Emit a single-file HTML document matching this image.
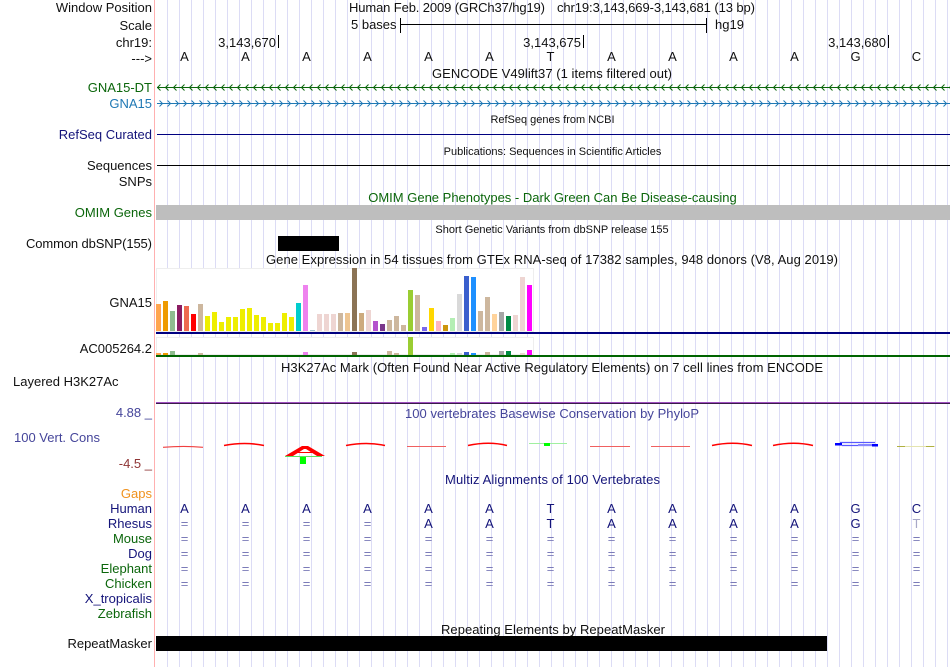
<!DOCTYPE html>
<html><head><meta charset="utf-8"><style>
html,body{margin:0;padding:0;background:#fff;width:950px;height:667px;overflow:hidden}
svg{display:block}
text{font-family:"Liberation Sans",sans-serif;font-size:13px;fill:#111}
.e{text-anchor:end}.m{text-anchor:middle}
.s{font-size:11px}
.g{fill:#0b660b}.b{fill:#14147a}.eq{fill:#7b7bb8;font-size:13px}
</style></head><body>
<svg width="950" height="667" viewBox="0 0 950 667" xmlns="http://www.w3.org/2000/svg">
<defs>
<pattern id="cl" x="157" y="82" width="8" height="11" patternUnits="userSpaceOnUse"><path d="M3.500 2.500 L0.500 5.500 L3.500 8.500" fill="none" stroke="#0b660b" stroke-width="1"/></pattern>
<pattern id="cr" x="157" y="98" width="8" height="11" patternUnits="userSpaceOnUse"><path d="M2.500 2.500 L5.500 5.500 L2.500 8.500" fill="none" stroke="#1f78b4" stroke-width="1"/></pattern>
</defs>
<rect width="950" height="667" fill="#fff"/>
<path d="M167 333.500H950" stroke="#dcdcf5" stroke-width="667" stroke-dasharray="1 11" fill="none"/>
<rect x="154" y="0" width="1" height="667" fill="#ffb0b0"/>

<!-- left labels -->
<text class="e" x="152" y="12">Window Position</text>
<text class="e" x="152" y="30">Scale</text>
<text class="e" x="152" y="47">chr19:</text>
<text class="e" x="152" y="63">---&gt;</text>
<text class="e g" x="152" y="92">GNA15-DT</text>
<text class="e" x="152" y="108" style="fill:#1f78b4">GNA15</text>
<text class="e b" x="152" y="139">RefSeq Curated</text>
<text class="e" x="152" y="170">Sequences</text>
<text class="e" x="152" y="186">SNPs</text>
<text class="e g" x="152" y="217">OMIM Genes</text>
<text x="26" y="248" textLength="126">Common dbSNP(155)</text>
<text class="e" x="152" y="307">GNA15</text>
<text class="e" x="152" y="353">AC005264.2</text>
<text x="13" y="386">Layered H3K27Ac</text>
<text class="e" x="152" y="417" style="fill:#45459a">4.88 _</text>
<text x="14" y="442" style="fill:#45459a">100 Vert. Cons</text>
<text class="e" x="152" y="468" style="fill:#8f3535">-4.5 _</text>
<text class="e" x="152" y="498" style="fill:#f0921e">Gaps</text>
<text class="e b" x="152" y="513">Human</text>
<text class="e b" x="152" y="528">Rhesus</text>
<text class="e g" x="152" y="543">Mouse</text>
<text class="e b" x="152" y="558">Dog</text>
<text class="e g" x="152" y="573">Elephant</text>
<text class="e g" x="152" y="588">Chicken</text>
<text class="e b" x="152" y="603">X_tropicalis</text>
<text class="e g" x="152" y="618">Zebrafish</text>
<text class="e" x="152" y="648">RepeatMasker</text>

<!-- header -->
<text x="349" y="12" textLength="196">Human Feb. 2009 (GRCh37/hg19)</text>
<text x="557" y="12" textLength="198">chr19:3,143,669-3,143,681 (13 bp)</text>
<text x="351" y="29">5 bases</text>
<text x="715" y="29">hg19</text>
<path d="M400.500 18V33M706.500 18V33M400 24.500H707" stroke="#000" fill="none"/>
<text class="e" x="276" y="47">3,143,670</text>
<text class="e" x="581" y="47">3,143,675</text>
<text class="e" x="886" y="47">3,143,680</text>
<path d="M278.500 35V48M583.500 35V48M888.500 35V48" stroke="#000" fill="none"/>
<g text-anchor="middle" transform="translate(0.500,0)">
<text x="184" y="61">A</text><text x="245" y="61">A</text><text x="306" y="61">A</text><text x="367" y="61">A</text><text x="428" y="61">A</text><text x="489" y="61">A</text><text x="550" y="61">T</text><text x="611" y="61">A</text><text x="672" y="61">A</text><text x="733" y="61">A</text><text x="794" y="61">A</text><text x="855" y="61">G</text><text x="916" y="61">C</text>
</g>
<text x="432" y="78" textLength="240">GENCODE V49lift37 (1 items filtered out)</text>

<!-- genes -->
<rect x="157" y="82" width="793" height="11" fill="url(#cl)"/>
<rect x="157" y="87" width="793" height="1" fill="#0b660b"/>
<rect x="157" y="98" width="793" height="11" fill="url(#cr)"/>
<rect x="157" y="103" width="793" height="1" fill="#1f78b4"/>
<text class="m s" x="552.500" y="123">RefSeq genes from NCBI</text>
<rect x="157" y="134" width="793" height="1" fill="#000080"/>
<text class="m s" x="552.500" y="155">Publications: Sequences in Scientific Articles</text>
<rect x="157" y="165" width="793" height="1" fill="#000"/>
<text class="m g" x="552.500" y="202">OMIM Gene Phenotypes - Dark Green Can Be Disease-causing</text>
<rect x="156" y="205" width="794" height="15" fill="#bebebe"/>
<text class="m s" x="552" y="233">Short Genetic Variants from dbSNP release 155</text>
<rect x="278" y="236" width="61" height="15" fill="#000"/>
<text x="266" y="264" textLength="572">Gene Expression in 54 tissues from GTEx RNA-seq of 17382 samples, 948 donors (V8, Aug 2019)</text>

<!-- GTEx frame -->
<rect x="156.500" y="268.500" width="377" height="63" fill="#fff" stroke="#eee"/>
<rect x="156.500" y="337.500" width="377" height="17" fill="#fff" stroke="#eee"/>
<!-- GTEx bars -->
<g>
<rect x="156" y="304" width="5" height="27" fill="#ffa54f"/><rect x="163" y="301" width="5" height="30" fill="#ee9a00"/><rect x="170" y="311" width="5" height="20" fill="#8fbc8f"/><rect x="177" y="305" width="5" height="26" fill="#8b1c62"/><rect x="184" y="306" width="5" height="25" fill="#ee6a50"/><rect x="191" y="314" width="5" height="17" fill="#ff0000"/><rect x="198" y="304" width="5" height="27" fill="#cdb79e"/>
<rect x="205" y="316" width="5" height="15" fill="#eeee00"/><rect x="212" y="312" width="5" height="19" fill="#eeee00"/><rect x="219" y="322" width="5" height="9" fill="#eeee00"/><rect x="226" y="317" width="5" height="14" fill="#eeee00"/><rect x="233" y="317" width="5" height="14" fill="#eeee00"/><rect x="240" y="309" width="5" height="22" fill="#eeee00"/><rect x="247" y="308" width="5" height="23" fill="#eeee00"/><rect x="254" y="315" width="5" height="16" fill="#eeee00"/><rect x="261" y="317" width="5" height="14" fill="#eeee00"/><rect x="268" y="323" width="5" height="8" fill="#eeee00"/><rect x="275" y="323" width="5" height="8" fill="#eeee00"/><rect x="282" y="313" width="5" height="18" fill="#eeee00"/><rect x="289" y="317" width="5" height="14" fill="#eeee00"/>
<rect x="296" y="303" width="5" height="28" fill="#00cdcd"/><rect x="303" y="285" width="5" height="46" fill="#ee82ee"/><rect x="310" y="330" width="5" height="1" fill="#9ac0cd"/><rect x="317" y="314" width="5" height="17" fill="#eed5d2"/><rect x="324" y="314" width="5" height="17" fill="#eed5d2"/><rect x="331" y="314" width="5" height="17" fill="#eed5d2"/><rect x="338" y="313" width="5" height="18" fill="#cdb79e"/><rect x="345" y="313" width="5" height="18" fill="#eec591"/><rect x="352" y="268" width="5" height="63" fill="#8b7355"/><rect x="359" y="313" width="5" height="18" fill="#cdaa7d"/><rect x="366" y="310" width="5" height="21" fill="#eed5d2"/><rect x="373" y="321" width="5" height="10" fill="#b452cd"/><rect x="380" y="324" width="5" height="7" fill="#7a378b"/><rect x="387" y="320" width="5" height="11" fill="#cdb79e"/><rect x="394" y="316" width="5" height="15" fill="#cdb79e"/><rect x="401" y="325" width="5" height="6" fill="#cdb79e"/><rect x="408" y="290" width="5" height="41" fill="#9acd32"/><rect x="415" y="295" width="5" height="36" fill="#cdb79e"/><rect x="422" y="327" width="5" height="4" fill="#7a67ee"/><rect x="429" y="308" width="5" height="23" fill="#ffd700"/><rect x="436" y="321" width="5" height="10" fill="#ffb6c1"/><rect x="443" y="325" width="5" height="6" fill="#cd950c"/><rect x="450" y="318" width="5" height="13" fill="#b4eeb4"/><rect x="457" y="294" width="5" height="37" fill="#d9d9d9"/><rect x="464" y="276" width="5" height="55" fill="#3a5fcd"/><rect x="471" y="277" width="5" height="54" fill="#1e90ff"/><rect x="478" y="311" width="5" height="20" fill="#cdb79e"/><rect x="485" y="297" width="5" height="34" fill="#cdb79e"/><rect x="492" y="314" width="5" height="17" fill="#ffd39b"/><rect x="499" y="312" width="5" height="19" fill="#a6a6a6"/><rect x="506" y="316" width="5" height="15" fill="#008b45"/><rect x="513" y="315" width="5" height="16" fill="#eed5d2"/><rect x="520" y="277" width="5" height="54" fill="#eed5d2"/><rect x="527" y="285" width="5" height="46" fill="#ff00ff"/>
</g>
<rect x="156" y="332" width="794" height="2" fill="#000080"/>
<g>
<rect x="156" y="353" width="5" height="2" fill="#ffa54f"/><rect x="163" y="353" width="5" height="2" fill="#ee9a00"/><rect x="170" y="351" width="5" height="4" fill="#8fbc8f"/><rect x="198" y="353" width="5" height="2" fill="#cdb79e"/><rect x="303" y="352" width="5" height="3" fill="#ee82ee"/><rect x="352" y="352" width="5" height="3" fill="#8b7355"/><rect x="387" y="351" width="5" height="4" fill="#cdb79e"/><rect x="394" y="353" width="5" height="2" fill="#cdb79e"/><rect x="408" y="337" width="5" height="18" fill="#9acd32"/><rect x="450" y="353" width="5" height="2" fill="#b4eeb4"/><rect x="457" y="353" width="5" height="2" fill="#d9d9d9"/><rect x="464" y="352" width="5" height="3" fill="#3a5fcd"/><rect x="471" y="353" width="5" height="2" fill="#1e90ff"/><rect x="485" y="352" width="5" height="3" fill="#cdb79e"/><rect x="499" y="351" width="5" height="4" fill="#a6a6a6"/><rect x="506" y="351" width="5" height="4" fill="#008b45"/><rect x="520" y="353" width="5" height="2" fill="#eed5d2"/><rect x="527" y="350" width="5" height="5" fill="#ff00ff"/>
</g>
<rect x="156" y="355" width="794" height="2" fill="#006400"/>

<text x="281" y="372" textLength="542">H3K27Ac Mark (Often Found Near Active Regulatory Elements) on 7 cell lines from ENCODE</text>
<rect x="156" y="402" width="794" height="1" fill="#a050c0"/>
<rect x="156" y="403" width="794" height="1" fill="#3a1a4a"/>
<text x="405" y="418" textLength="294" style="fill:#45459a">100 vertebrates Basewise Conservation by PhyloP</text>

<!-- phyloP -->
<g fill="none" stroke="#f00">
<path d="M163 447.300 Q184 445.600 203 447.300" stroke="#f04040" stroke-width="1.200"/>
<path d="M224 445.500 Q245 441.500 264 445.500" stroke-width="1.500"/>
<path d="M346 445.500 Q367 441.500 385 445.500" stroke-width="1.500"/>
<path d="M407 446.500H446" stroke="#f06060"/>
<path d="M468 445.500 Q489 441 507 445.500" stroke-width="1.500"/>
<path d="M590 446.500H630" stroke="#f06060"/>
<path d="M651 446.500H690" stroke="#f06060"/>
<path d="M712 445.500 Q733 441 752 445.500" stroke-width="1.500"/>
<path d="M773 445.500 Q794 441 813 445.500" stroke-width="1.500"/>
</g>
<path d="M285 456 L302 446 H308 L325 456 H317 L306 449 H304 L293 456Z" fill="#f00"/>
<rect x="296" y="452" width="17" height="1" fill="#f00"/>
<rect x="285" y="456" width="37" height="1" fill="#60e060"/>
<rect x="300" y="457" width="6" height="7" fill="#0f0"/>
<rect x="529" y="443" width="38" height="1" fill="#a0f0a0"/>
<rect x="544" y="443" width="6" height="3" fill="#0f0"/>
<g fill="none" stroke="#5858ff" stroke-width="1.200">
<path d="M840 442.500H875M842 445.500H875"/>
<path d="M858 445H872" stroke-width="2" stroke="#8888ff"/>
</g>
<rect x="835" y="443" width="7" height="2.500" fill="#00f"/>
<rect x="872" y="444" width="6" height="2.500" fill="#00f"/>
<rect x="897" y="446" width="38" height="1" fill="#e4e4b0"/>
<rect x="897" y="446" width="8" height="1" fill="#b0b040"/>
<rect x="926" y="446" width="8" height="1" fill="#b0b040"/>

<text x="445" y="484" textLength="215" class="b">Multiz Alignments of 100 Vertebrates</text>

<!-- multiz -->
<g text-anchor="middle" transform="translate(0.500,0)">
<text class="b" x="184" y="513">A</text><text class="b" x="245" y="513">A</text><text class="b" x="306" y="513">A</text><text class="b" x="367" y="513">A</text><text class="b" x="428" y="513">A</text><text class="b" x="489" y="513">A</text><text class="b" x="550" y="513">T</text><text class="b" x="611" y="513">A</text><text class="b" x="672" y="513">A</text><text class="b" x="733" y="513">A</text><text class="b" x="794" y="513">A</text><text class="b" x="855" y="513">G</text><text class="b" x="916" y="513">C</text>
<text class="eq" x="184" y="528">=</text><text class="eq" x="245" y="528">=</text><text class="eq" x="306" y="528">=</text><text class="eq" x="367" y="528">=</text><text class="b" x="428" y="528">A</text><text class="b" x="489" y="528">A</text><text class="b" x="550" y="528">T</text><text class="b" x="611" y="528">A</text><text class="b" x="672" y="528">A</text><text class="b" x="733" y="528">A</text><text class="b" x="794" y="528">A</text><text class="b" x="855" y="528">G</text><text x="916" y="528" style="fill:#a8a8c8">T</text>
<text class="eq" x="184" y="543">=</text><text class="eq" x="245" y="543">=</text><text class="eq" x="306" y="543">=</text><text class="eq" x="367" y="543">=</text><text class="eq" x="428" y="543">=</text><text class="eq" x="489" y="543">=</text><text class="eq" x="550" y="543">=</text><text class="eq" x="611" y="543">=</text><text class="eq" x="672" y="543">=</text><text class="eq" x="733" y="543">=</text><text class="eq" x="794" y="543">=</text><text class="eq" x="855" y="543">=</text><text class="eq" x="916" y="543">=</text>
<text class="eq" x="184" y="558">=</text><text class="eq" x="245" y="558">=</text><text class="eq" x="306" y="558">=</text><text class="eq" x="367" y="558">=</text><text class="eq" x="428" y="558">=</text><text class="eq" x="489" y="558">=</text><text class="eq" x="550" y="558">=</text><text class="eq" x="611" y="558">=</text><text class="eq" x="672" y="558">=</text><text class="eq" x="733" y="558">=</text><text class="eq" x="794" y="558">=</text><text class="eq" x="855" y="558">=</text><text class="eq" x="916" y="558">=</text>
<text class="eq" x="184" y="573">=</text><text class="eq" x="245" y="573">=</text><text class="eq" x="306" y="573">=</text><text class="eq" x="367" y="573">=</text><text class="eq" x="428" y="573">=</text><text class="eq" x="489" y="573">=</text><text class="eq" x="550" y="573">=</text><text class="eq" x="611" y="573">=</text><text class="eq" x="672" y="573">=</text><text class="eq" x="733" y="573">=</text><text class="eq" x="794" y="573">=</text><text class="eq" x="855" y="573">=</text><text class="eq" x="916" y="573">=</text>
<text class="eq" x="184" y="588">=</text><text class="eq" x="245" y="588">=</text><text class="eq" x="306" y="588">=</text><text class="eq" x="367" y="588">=</text><text class="eq" x="428" y="588">=</text><text class="eq" x="489" y="588">=</text><text class="eq" x="550" y="588">=</text><text class="eq" x="611" y="588">=</text><text class="eq" x="672" y="588">=</text><text class="eq" x="733" y="588">=</text><text class="eq" x="794" y="588">=</text><text class="eq" x="855" y="588">=</text><text class="eq" x="916" y="588">=</text>
</g>

<text x="441" y="634" textLength="224">Repeating Elements by RepeatMasker</text>
<rect x="156" y="636" width="671" height="15" fill="#000"/>
</svg>
</body></html>
